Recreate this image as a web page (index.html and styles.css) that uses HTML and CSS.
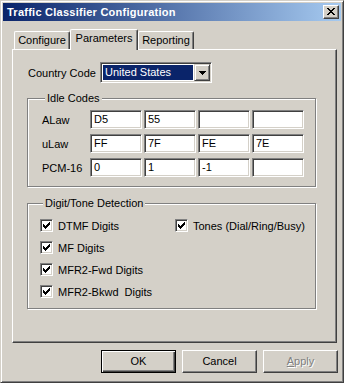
FILE: index.html
```html
<!DOCTYPE html>
<html lang="en">
<head>
    <meta charset="UTF-8">
    <title>Traffic Classifier Configuration</title>
    <link rel="stylesheet" href="styles.css">
</head>
<body>
    <div class="window">
        <div class="titlebar">
            <span class="title">Traffic Classifier Configuration</span>
            <div class="close-btn">
                <svg width="8" height="7" viewBox="0 0 8 7" shape-rendering="crispEdges">
                    <rect x="0" y="0" width="2" height="1"/><rect x="6" y="0" width="2" height="1"/>
                    <rect x="1" y="1" width="2" height="1"/><rect x="5" y="1" width="2" height="1"/>
                    <rect x="2" y="2" width="4" height="1"/>
                    <rect x="3" y="3" width="2" height="1"/>
                    <rect x="2" y="4" width="4" height="1"/>
                    <rect x="1" y="5" width="2" height="1"/><rect x="5" y="5" width="2" height="1"/>
                    <rect x="0" y="6" width="2" height="1"/><rect x="6" y="6" width="2" height="1"/>
                </svg>
            </div>
        </div>

        <div class="dialog-body">
            <div class="tabs">
                <div class="tab tab-configure">Configure</div>
                <div class="tab tab-active">Parameters</div>
                <div class="tab tab-reporting">Reporting</div>
            </div>

            <div class="panel">
                <div class="country-row">
                    <span class="country-label">Country Code</span>
                    <div class="combo">
                        <span class="combo-value">United States</span>
                        <span class="combo-btn">
                            <svg width="7" height="4" viewBox="0 0 7 4" shape-rendering="crispEdges">
                                <rect x="0" y="0" width="7" height="1"/>
                                <rect x="1" y="1" width="5" height="1"/>
                                <rect x="2" y="2" width="3" height="1"/>
                                <rect x="3" y="3" width="1" height="1"/>
                            </svg>
                        </span>
                    </div>
                </div>

                <div class="group group-idle">
                    <span class="group-title">Idle Codes</span>
                    <div class="code-row">
                        <span class="code-label">ALaw</span>
                        <span class="field">D5</span>
                        <span class="field">55</span>
                        <span class="field"></span>
                        <span class="field"></span>
                    </div>
                    <div class="code-row">
                        <span class="code-label">uLaw</span>
                        <span class="field">FF</span>
                        <span class="field">7F</span>
                        <span class="field">FE</span>
                        <span class="field">7E</span>
                    </div>
                    <div class="code-row">
                        <span class="code-label">PCM-16</span>
                        <span class="field">0</span>
                        <span class="field">1</span>
                        <span class="field">-1</span>
                        <span class="field"></span>
                    </div>
                </div>

                <div class="group group-detect">
                    <span class="group-title">Digit/Tone Detection</span>
                    <div class="check-grid">
                        <label class="check"><span class="box"><svg class="tick" width="7" height="7" viewBox="0 0 7 7" shape-rendering="crispEdges"><rect x="0" y="2" width="1" height="3"/><rect x="1" y="3" width="1" height="3"/><rect x="2" y="4" width="1" height="3"/><rect x="3" y="3" width="1" height="3"/><rect x="4" y="2" width="1" height="3"/><rect x="5" y="1" width="1" height="3"/><rect x="6" y="0" width="1" height="3"/></svg></span>DTMF Digits</label>
                        <label class="check"><span class="box"><svg class="tick" width="7" height="7" viewBox="0 0 7 7" shape-rendering="crispEdges"><rect x="0" y="2" width="1" height="3"/><rect x="1" y="3" width="1" height="3"/><rect x="2" y="4" width="1" height="3"/><rect x="3" y="3" width="1" height="3"/><rect x="4" y="2" width="1" height="3"/><rect x="5" y="1" width="1" height="3"/><rect x="6" y="0" width="1" height="3"/></svg></span>Tones (Dial/Ring/Busy)</label>
                        <label class="check"><span class="box"><svg class="tick" width="7" height="7" viewBox="0 0 7 7" shape-rendering="crispEdges"><rect x="0" y="2" width="1" height="3"/><rect x="1" y="3" width="1" height="3"/><rect x="2" y="4" width="1" height="3"/><rect x="3" y="3" width="1" height="3"/><rect x="4" y="2" width="1" height="3"/><rect x="5" y="1" width="1" height="3"/><rect x="6" y="0" width="1" height="3"/></svg></span>MF Digits</label>
                        <span></span>
                        <label class="check"><span class="box"><svg class="tick" width="7" height="7" viewBox="0 0 7 7" shape-rendering="crispEdges"><rect x="0" y="2" width="1" height="3"/><rect x="1" y="3" width="1" height="3"/><rect x="2" y="4" width="1" height="3"/><rect x="3" y="3" width="1" height="3"/><rect x="4" y="2" width="1" height="3"/><rect x="5" y="1" width="1" height="3"/><rect x="6" y="0" width="1" height="3"/></svg></span>MFR2-Fwd Digits</label>
                        <span></span>
                        <label class="check"><span class="box"><svg class="tick" width="7" height="7" viewBox="0 0 7 7" shape-rendering="crispEdges"><rect x="0" y="2" width="1" height="3"/><rect x="1" y="3" width="1" height="3"/><rect x="2" y="4" width="1" height="3"/><rect x="3" y="3" width="1" height="3"/><rect x="4" y="2" width="1" height="3"/><rect x="5" y="1" width="1" height="3"/><rect x="6" y="0" width="1" height="3"/></svg></span>MFR2-Bkwd&nbsp; Digits</label>
                        <span></span>
                    </div>
                </div>
            </div>

            <div class="buttons">
                <div class="btn btn-default">OK</div>
                <div class="btn">Cancel</div>
                <div class="btn btn-disabled"><u>A</u>pply</div>
            </div>
        </div>
    </div>
</body>
</html>
```

FILE: styles.css
```css
body {
    margin: 0;
    font-family: 'Liberation Sans', Arial, sans-serif;
    font-size: 11px;
    color: #000;
    background: #d4d0c8;
}

.window {
    width: 344px;
    height: 383px;
    box-sizing: border-box;
    background-color: #d4d0c8;
    border: 1px solid;
    border-color: #d4d0c8 #404040 #404040 #d4d0c8;
    box-shadow: inset 1px 1px #fff, inset -1px -1px #808080;
    padding: 2px;
}

.titlebar {
    height: 18px;
    display: flex;
    align-items: center;
    justify-content: space-between;
    background: linear-gradient(to right, #0a246a, #a6caf0);
    color: #fff;
    font-weight: bold;
    padding-left: 4px;
}

.title {
    letter-spacing: 0.25px;
}

.close-btn {
    width: 16px;
    height: 14px;
    box-sizing: border-box;
    margin-right: 2px;
    background-color: #d4d0c8;
    border: 1px solid;
    border-color: #fff #404040 #404040 #fff;
    box-shadow: inset -1px -1px #808080;
    display: flex;
    align-items: center;
    justify-content: center;
    padding-bottom: 1px;
}

.dialog-body {
    padding: 8px 0 0 9px;
}

.tabs {
    display: flex;
    align-items: flex-end;
    height: 20px;
    padding-left: 2px;
}

.tab {
    position: relative;
    box-sizing: border-box;
    width: 56px;
    height: 18px;
    border: 1px solid;
    border-bottom: none;
    border-color: #fff #404040 #fff #fff;
    box-shadow: inset -1px 0 #808080;
    border-radius: 2px 2px 0 0;
    text-align: center;
    line-height: 17px;
}

.tab-active {
    width: 68px;
    height: 21px;
    margin-bottom: -1px;
    background-color: #d4d0c8;
    z-index: 1;
    line-height: 16px;
}

.panel {
    width: 325px;
    height: 294px;
    box-sizing: border-box;
    border: 1px solid;
    border-color: #fff #404040 #404040 #fff;
    box-shadow: inset -1px -1px #808080;
    padding: 12px 0 0 14px;
}

.country-row {
    display: flex;
    align-items: center;
    padding-left: 1px;
}

.country-label {
    width: 72px;
}

.combo {
    width: 112px;
    height: 21px;
    box-sizing: border-box;
    border: 1px solid;
    border-color: #808080 #fff #fff #808080;
    box-shadow: inset 1px 1px #404040, inset -1px -1px #d4d0c8;
    background: #fff;
    padding: 1px;
    display: flex;
}

.combo-value {
    flex: 1;
    margin: 1px;
    background: #0a246a;
    color: #fff;
    padding-left: 2px;
    line-height: 15px;
}

.combo-btn {
    width: 16px;
    box-sizing: border-box;
    background: #d4d0c8;
    border: 1px solid;
    border-color: #d4d0c8 #404040 #404040 #d4d0c8;
    box-shadow: inset 1px 1px #fff, inset -1px -1px #808080;
    display: flex;
    align-items: center;
    justify-content: center;
}

.group {
    width: 289px;
    box-sizing: border-box;
    border: 1px solid #808080;
    box-shadow: inset 1px 1px #fff, 1px 1px #fff;
}

.group-title {
    display: block;
    width: fit-content;
    margin: -7px 0 0 3px;
    padding: 0 2px;
    line-height: 13px;
    background: #d4d0c8;
}

.group-idle {
    margin-top: 15px;
    padding: 0 0 9px 14px;
}

.code-row {
    display: flex;
    align-items: center;
    gap: 2px;
    margin-top: 5px;
}

.code-label {
    width: 46px;
}

.field {
    width: 52px;
    height: 19px;
    box-sizing: border-box;
    border: 1px solid;
    border-color: #808080 #fff #fff #808080;
    box-shadow: inset 1px 1px #404040, inset -1px -1px #d4d0c8;
    background: #fff;
    padding-left: 3px;
    line-height: 17px;
}

.group-detect {
    margin-top: 16px;
    padding: 0 0 10px 12px;
}

.check-grid {
    display: grid;
    grid-template-columns: 135px 1fr;
    row-gap: 9px;
    margin-top: 9px;
}

.check {
    display: flex;
    align-items: center;
    gap: 5px;
    height: 13px;
}

.box {
    width: 13px;
    height: 13px;
    box-sizing: border-box;
    border: 1px solid;
    border-color: #808080 #fff #fff #808080;
    box-shadow: inset 1px 1px #404040, inset -1px -1px #d4d0c8;
    background: #fff;
    display: flex;
    align-items: center;
    justify-content: center;
}

.buttons {
    display: flex;
    justify-content: flex-end;
    gap: 6px;
    margin-top: 7px;
    padding-right: 3px;
}

.btn {
    width: 75px;
    height: 23px;
    box-sizing: border-box;
    border: 1px solid;
    border-color: #fff #404040 #404040 #fff;
    box-shadow: inset -1px -1px #808080;
    text-align: center;
    line-height: 21px;
}

.btn-default {
    border-color: #000;
    box-shadow: inset 1px 1px #fff, inset -1px -1px #404040, inset -2px -2px #808080;
}

.btn-disabled {
    color: #808080;
    text-shadow: 1px 1px #fff;
}
```
